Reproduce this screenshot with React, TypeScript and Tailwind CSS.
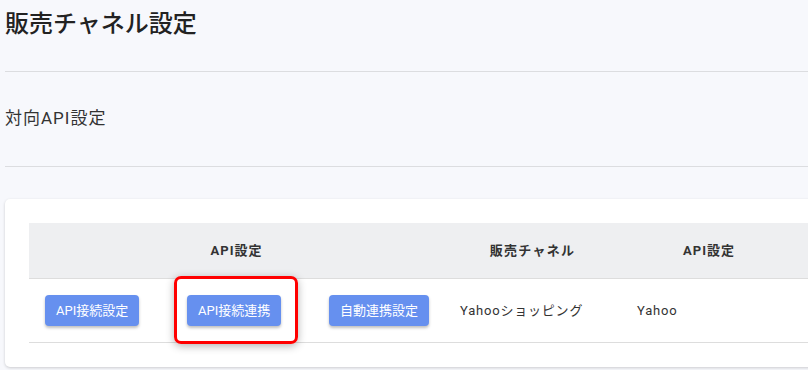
import React from "react";

const font = { fontFamily: "Roboto, 'Noto Sans CJK JP', sans-serif" };

const buttonClass =
  "h-[31px] px-[11px] rounded-[4px] bg-[#6690ef] text-white text-[13px] shadow-[0_2px_3px_rgba(0,0,0,0.25)] whitespace-nowrap";

export default function App() {
  return (
    <div
      className="w-[808px] h-[370px] overflow-hidden bg-[#f7f8fc] text-[#222]"
      style={font}
    >
      <div className="pl-[5px]">
        {/* Page title */}
        <div className="h-[71px] flex items-start pt-[8px]">
          <h1 className="text-[24px] font-medium leading-[32px] text-[#222]">
            販売チャネル設定
          </h1>
        </div>
        <div className="border-t border-[#dcdde0] w-[900px]" />

        {/* Section */}
        <div className="h-[94px] flex items-center">
          <p className="text-[17px] tracking-[1px] text-[#333]">対向API設定</p>
        </div>
        <div className="border-t border-[#dcdde0] w-[900px]" />

        {/* Card */}
        <div className="mt-[32px] w-[900px] bg-white rounded-[5px] shadow-[0_1px_3px_rgba(0,0,0,0.18)] p-[24px] pr-0">
          <div className="grid grid-cols-[142px_142px_131px_177px_176px_1fr] text-[13px] text-[#333]">
            {/* Header */}
            <div className="col-span-3 h-[56px] bg-[#eeeff1] border-b border-[#dddddd] flex items-center justify-center font-bold tracking-[1px]">
              API設定
            </div>
            <div className="h-[56px] bg-[#eeeff1] border-b border-[#dddddd] flex items-center justify-center font-bold tracking-[1.3px]">
              販売チャネル
            </div>
            <div className="h-[56px] bg-[#eeeff1] border-b border-[#dddddd] flex items-center justify-center font-bold tracking-[1px]">
              API設定
            </div>
            <div className="h-[56px] bg-[#eeeff1] border-b border-[#dddddd]" />

            {/* Row */}
            <div className="h-[64px] border-b border-[#dddddd] flex items-center pl-[16px]">
              <button className={buttonClass}>API接続設定</button>
            </div>
            <div className="h-[64px] border-b border-[#dddddd] flex items-center pl-[16px]">
              <div className="relative">
                <button className={buttonClass}>API接続連携</button>
                <div className="absolute left-[-13px] right-[-17px] top-[-19px] bottom-[-18px] border-[3px] border-[#ff0000] rounded-[7px] shadow-[0_2px_8px_rgba(0,0,0,0.3)] pointer-events-none" />
              </div>
            </div>
            <div className="h-[64px] border-b border-[#dddddd] flex items-center pl-[16px]">
              <button className={buttonClass}>自動連携設定</button>
            </div>
            <div className="h-[64px] border-b border-[#dddddd] flex items-center pl-[16px] tracking-[0.8px]">
              Yahooショッピング
            </div>
            <div className="h-[64px] border-b border-[#dddddd] flex items-center pl-[16px] tracking-[0.8px]">
              Yahoo
            </div>
            <div className="h-[64px] border-b border-[#dddddd]" />
          </div>
        </div>
      </div>
    </div>
  );
}
